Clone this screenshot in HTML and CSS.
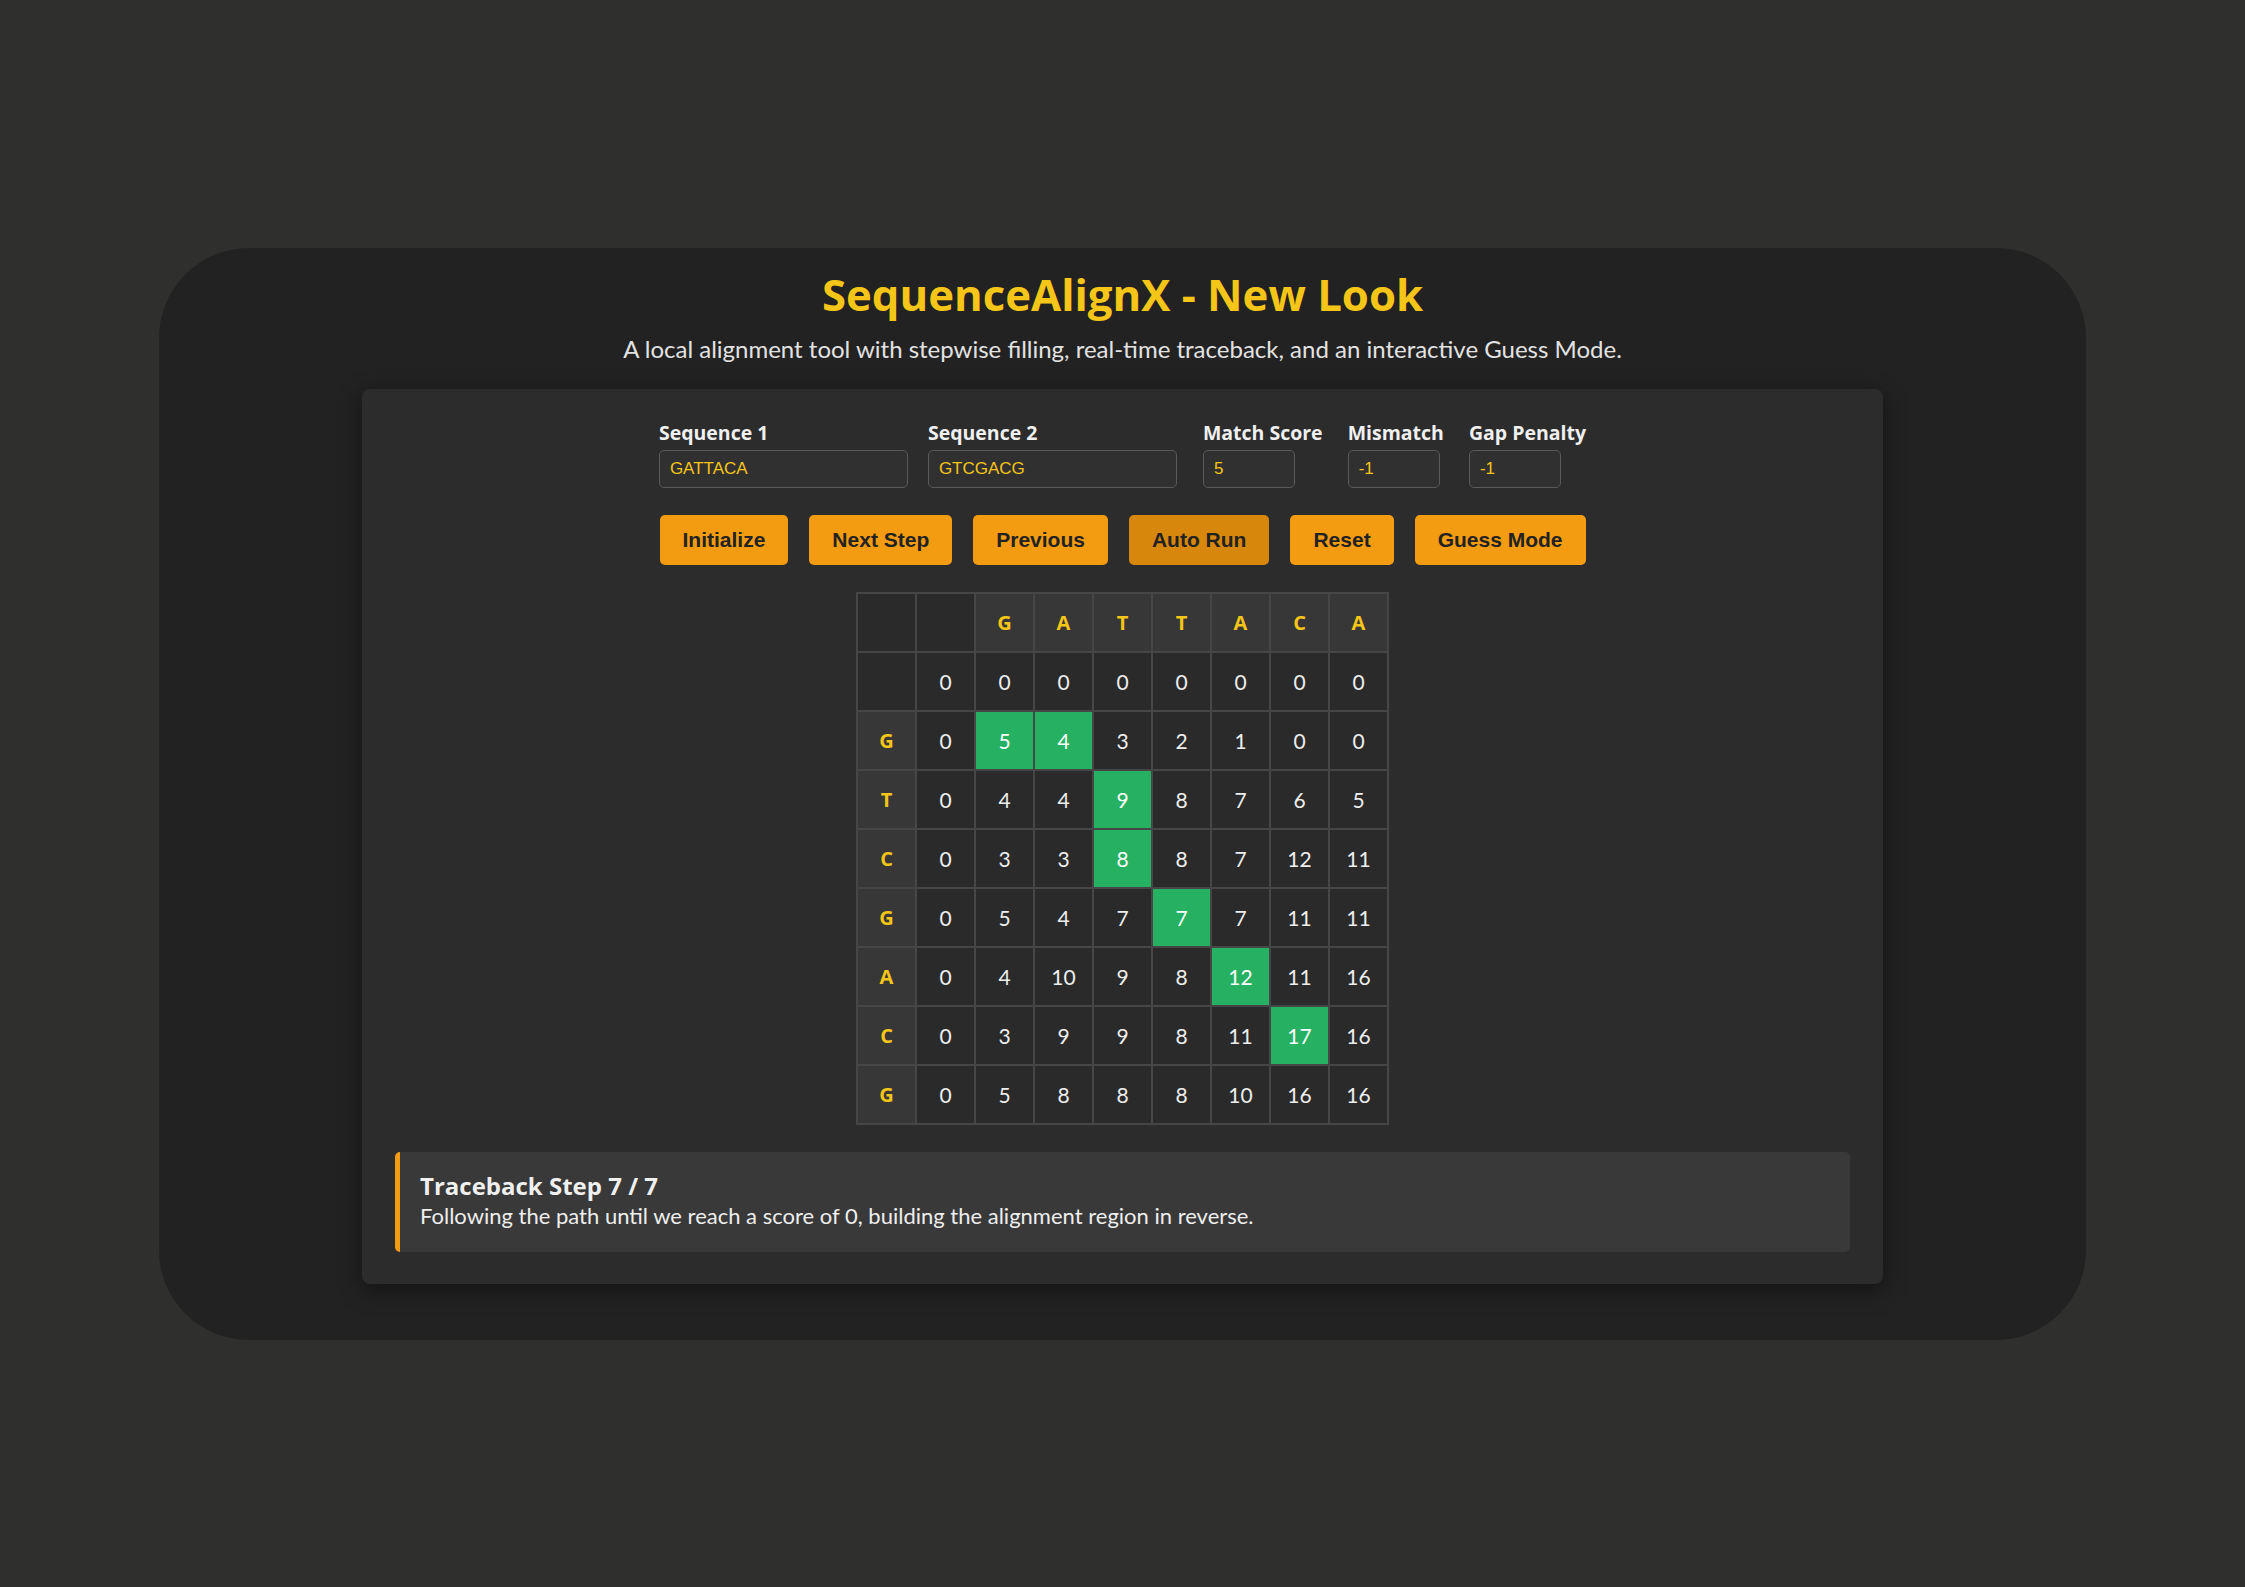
FILE: index.html
```html
<!DOCTYPE html>
<html lang="en">
<head>
<meta charset="utf-8">
<title>SequenceAlignX - New Look</title>
<link rel="stylesheet" href="styles.css">
</head>
<body>
<div class="shell">
  <h1 class="title">SequenceAlignX - New Look</h1>
  <p class="subtitle">A local alignment tool with stepwise filling, real-time traceback, and an interactive Guess Mode.</p>
  <div class="card">
    <div class="controls">
      <div class="field seq">
        <label class="label">Sequence 1</label>
        <input class="input" type="text" value="GATTACA">
      </div>
      <div class="field seq">
        <label class="label">Sequence 2</label>
        <input class="input" type="text" value="GTCGACG">
      </div>
      <div class="field num first-num">
        <label class="label">Match Score</label>
        <input class="input" type="text" value="5">
      </div>
      <div class="field num">
        <label class="label">Mismatch</label>
        <input class="input" type="text" value="-1">
      </div>
      <div class="field num">
        <label class="label">Gap Penalty</label>
        <input class="input" type="text" value="-1">
      </div>
    </div>
    <div class="buttons">
      <button class="btn">Initialize</button>
      <button class="btn">Next Step</button>
      <button class="btn">Previous</button>
      <button class="btn active">Auto Run</button>
      <button class="btn">Reset</button>
      <button class="btn">Guess Mode</button>
    </div>
    <table class="matrix">
      <tr>
        <td></td><td></td>
        <td class="head">G</td><td class="head">A</td><td class="head">T</td><td class="head">T</td><td class="head">A</td><td class="head">C</td><td class="head">A</td>
      </tr>
      <tr>
        <td></td><td>0</td><td>0</td><td>0</td><td>0</td><td>0</td><td>0</td><td>0</td><td>0</td>
      </tr>
      <tr>
        <td class="head">G</td><td>0</td><td class="path">5</td><td class="path">4</td><td>3</td><td>2</td><td>1</td><td>0</td><td>0</td>
      </tr>
      <tr>
        <td class="head">T</td><td>0</td><td>4</td><td>4</td><td class="path">9</td><td>8</td><td>7</td><td>6</td><td>5</td>
      </tr>
      <tr>
        <td class="head">C</td><td>0</td><td>3</td><td>3</td><td class="path">8</td><td>8</td><td>7</td><td>12</td><td>11</td>
      </tr>
      <tr>
        <td class="head">G</td><td>0</td><td>5</td><td>4</td><td>7</td><td class="path">7</td><td>7</td><td>11</td><td>11</td>
      </tr>
      <tr>
        <td class="head">A</td><td>0</td><td>4</td><td>10</td><td>9</td><td>8</td><td class="path">12</td><td>11</td><td>16</td>
      </tr>
      <tr>
        <td class="head">C</td><td>0</td><td>3</td><td>9</td><td>9</td><td>8</td><td>11</td><td class="path">17</td><td>16</td>
      </tr>
      <tr>
        <td class="head">G</td><td>0</td><td>5</td><td>8</td><td>8</td><td>8</td><td>10</td><td>16</td><td>16</td>
      </tr>
    </table>
    <div class="status">
      <div class="status-title">Traceback Step 7 / 7</div>
      <div class="status-text">Following the path until we reach a score of 0, building the alignment region in reverse.</div>
    </div>
  </div>
</div>
</body>
</html>
```
FILE: styles.css
```css
* { box-sizing: border-box; }

html, body {
  margin: 0;
  padding: 0;
}

body {
  background: #2f2f2d;
  min-height: 100vh;
  display: flex;
  align-items: center;
  justify-content: center;
  font-family: "Lato", "Open Sans", sans-serif;
  color: #eeeeee;
}

.shell {
  width: 1927px;
  background: #222222;
  border-radius: 90px;
  padding: 19px 203px 56px;
  display: flex;
  flex-direction: column;
  align-items: center;
}

.title {
  margin: 0;
  font-family: "Open Sans", sans-serif;
  font-weight: 700;
  font-size: 43.7px;
  line-height: 54px;
  color: #f5c518;
}

.subtitle {
  margin: 15px 0 0;
  font-size: 24px;
  line-height: 25px;
  color: #e2e2e2;
}

.card {
  margin-top: 28px;
  width: 1521px;
  background: #2c2c2c;
  border-radius: 8px;
  box-shadow: 0 6px 24px rgba(0, 0, 0, 0.45);
  padding: 32px 33px;
  display: flex;
  flex-direction: column;
  align-items: center;
}

.controls {
  display: flex;
  gap: 20px;
}

.field {
  display: flex;
  flex-direction: column;
}

.first-num { margin-left: 6px; }
.field.num + .field.num { margin-left: 5px; }

.label {
  font-family: "Open Sans", sans-serif;
  font-weight: 700;
  font-size: 19.5px;
  line-height: 24px;
  color: #f0f0f0;
  margin-bottom: 5px;
  white-space: nowrap;
}

.input {
  height: 38px;
  padding: 8px 10px;
  border: 1px solid #5a5a5a;
  border-radius: 5px;
  background: #303030;
  color: #f5c518;
  font-family: "Liberation Sans", Arial, sans-serif;
  font-size: 17px;
  line-height: 20px;
  outline: none;
}

.seq .input { width: 249px; }
.num .input { width: 92px; }

.buttons {
  margin-top: 27px;
  display: flex;
  gap: 21px;
}

.btn {
  height: 50px;
  padding: 0 23px;
  border: none;
  border-radius: 5px;
  background: #f39c12;
  color: #222222;
  font-family: "Liberation Sans", Arial, sans-serif;
  font-weight: 700;
  font-size: 21px;
  cursor: pointer;
}

.btn.active { background: #d8870d; }

.matrix {
  margin-top: 27px;
  border-collapse: collapse;
}

.matrix td {
  width: 59px;
  height: 59px;
  padding: 0;
  border: 2px solid #464646;
  background: #2a2a2a;
  text-align: center;
  vertical-align: middle;
  font-family: "Lato", sans-serif;
  font-size: 21px;
  color: #eeeeee;
}

.matrix td.head {
  background: #373737;
  color: #f5c518;
  font-family: "Open Sans", sans-serif;
  font-weight: 700;
  font-size: 20px;
}

.matrix td.path {
  background: #26b062;
  color: #ffffff;
}

.status {
  margin-top: 27px;
  align-self: stretch;
  background: #393939;
  border-left: 5px solid #f39c12;
  border-radius: 5px;
  padding: 19px 20px 23px;
}

.status-title {
  font-family: "Open Sans", sans-serif;
  font-weight: 700;
  font-size: 24px;
  line-height: 29px;
  color: #f0f0f0;
}

.status-text {
  margin-top: 3px;
  font-size: 22px;
  line-height: 26px;
  color: #eeeeee;
}
```
